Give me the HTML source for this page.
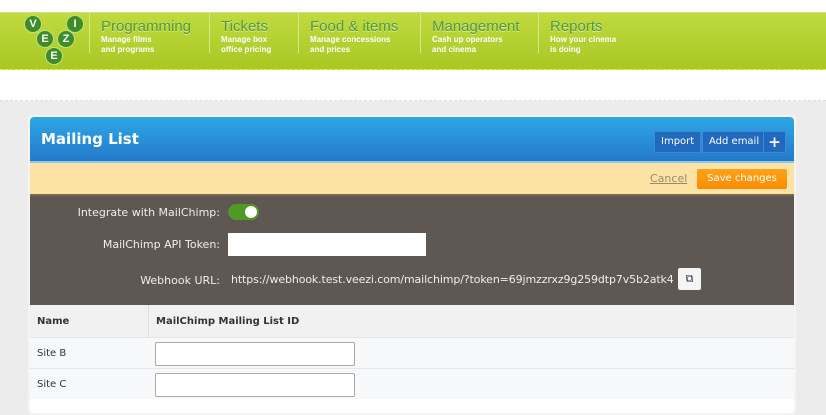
<!DOCTYPE html>
<html><head><style>
*{margin:0;padding:0;box-sizing:border-box}
body{width:826px;height:400px;overflow:hidden;background:#ececec;font-family:"DejaVu Sans","Liberation Sans",sans-serif;position:relative}
.top{position:absolute;left:0;top:0;width:826px;height:101px;background:#fff;border-bottom:1px dashed #ddd}
.green{position:absolute;left:0;top:12px;width:826px;height:58px;background:linear-gradient(#c0da40,#a8c823);border-top:1px solid #d0e080;border-bottom:1px dashed #e6f040}
.c{position:absolute;width:18px;height:18px;border-radius:50%;background:#3f8d2a;color:#fff;font:bold 11px "Liberation Sans",sans-serif;text-align:center;line-height:16px;border:1px solid #bfe07a}
.nav{position:absolute;top:0;height:40px;border-left:1px solid #d7e78a;padding:5px 0 0 11px}
.nav b{display:block;font:15px "Liberation Sans",sans-serif;color:#55994a;text-shadow:0 1px 0 #d8ec90}
.nav span{display:block;font:bold 8px/10px "Liberation Sans",sans-serif;color:#fff}
.panel{position:absolute;left:28px;top:115px;width:768px;height:300px;background:#fff;border:2px solid #f4f4f4;border-radius:6px;overflow:hidden}
.blue{height:46px;background:linear-gradient(#2ca8e6,#2579c9);position:relative;border-bottom:2px solid #8cc6ee}
.blue h1{position:absolute;left:11px;top:13px;font:bold 15px "DejaVu Sans",sans-serif;color:#fff}
.btn{position:absolute;top:14px;height:22px;background:#2169bd;border:1px solid #3a8ad6;color:#fff;font:10px "DejaVu Sans",sans-serif;line-height:20px;padding:0 6px;border-radius:2px}
.orange{height:33px;background:#fde2a6;position:relative;border-bottom:2px solid #7a6a50}
.brown{height:109px;background:#5f5751;position:relative;color:#eee;font:11px "DejaVu Sans",sans-serif}
.lbl{position:absolute;right:574px;text-align:right;white-space:nowrap}
.th{height:32px;background:#f1f1f1;position:relative;font:bold 10px "DejaVu Sans",sans-serif;color:#333}
.row{height:31px;background:#f6f8fa;border-top:1px solid #e6e6e6;position:relative;font:10px "DejaVu Sans",sans-serif;color:#333}
.inp{position:absolute;left:125px;top:4px;width:200px;height:24px;background:#fff;border:1px solid #aaa;border-radius:2px}
</style></head><body>
<div class="top"></div>
<div class="green">
 <div class="c" style="left:24px;top:2px">V</div>
 <div class="c" style="left:66px;top:2px">I</div>
 <div class="c" style="left:36px;top:17px">E</div>
 <div class="c" style="left:57px;top:17px">Z</div>
 <div class="c" style="left:45px;top:34px">E</div>
 <div class="nav" style="left:89px"><b>Programming</b><span>Manage films<br>and programs</span></div>
 <div class="nav" style="left:209px"><b>Tickets</b><span>Manage box<br>office pricing</span></div>
 <div class="nav" style="left:298px"><b>Food &amp; items</b><span>Manage concessions<br>and prices</span></div>
 <div class="nav" style="left:420px"><b>Management</b><span>Cash up operators<br>and cinema</span></div>
 <div class="nav" style="left:538px"><b>Reports</b><span>How your cinema<br>is doing</span></div>
</div>
<div class="panel">
 <div class="blue"><h1>Mailing List</h1>
  <div class="btn" style="left:624px">Import</div>
  <div class="btn" style="left:672px;width:84px">Add email <span style="position:absolute;right:0;top:0;width:22px;border-left:1px solid #3a8ad6;text-align:center;font-weight:bold;font-size:15px">+</span></div>
 </div>
 <div class="orange">
  <span style="position:absolute;left:620px;top:9px;font:11px 'DejaVu Sans',sans-serif;color:#9a8a6a;text-decoration:underline">Cancel</span>
  <div style="position:absolute;left:667px;top:6px;width:90px;height:20px;background:linear-gradient(#ffa31a,#f98c00);color:#fff;font:10px 'DejaVu Sans',sans-serif;line-height:20px;text-align:center;border-radius:2px">Save changes</div>
 </div>
 <div class="brown">
  <div class="lbl" style="top:10px">Integrate with MailChimp:</div>
  <div style="position:absolute;left:198px;top:8px;width:31px;height:16px;border-radius:8px;background:#4f9a24"><div style="position:absolute;right:2px;top:2px;width:12px;height:12px;border-radius:50%;background:#fff"></div></div>
  <div class="lbl" style="top:42px">MailChimp API Token:</div>
  <div style="position:absolute;left:198px;top:37px;width:198px;height:23px;background:#fff"></div>
  <div class="lbl" style="top:78px">Webhook URL:</div>
  <div style="position:absolute;left:201px;top:77px;font-size:11px;letter-spacing:-0.12px;white-space:nowrap">https://webhook.test.veezi.com/mailchimp/?token=69jmzzrxz9g259dtp7v5b2atk4</div>
  <div style="position:absolute;left:648px;top:72px;width:23px;height:22px;background:#f4f4f4;border-radius:2px;color:#333;text-align:center;font-size:11px;line-height:22px">⧉</div>
 </div>
 <div class="th"><span style="position:absolute;left:7px;top:11px">Name</span><div style="position:absolute;left:118px;top:0;height:32px;border-left:1px solid #ddd"></div><span style="position:absolute;left:126px;top:11px">MailChimp Mailing List ID</span></div>
 <div class="row"><span style="position:absolute;left:7px;top:10px">Site B</span><div class="inp"></div></div>
 <div class="row"><span style="position:absolute;left:7px;top:10px">Site C</span><div class="inp"></div></div>
</div>
</body></html>
